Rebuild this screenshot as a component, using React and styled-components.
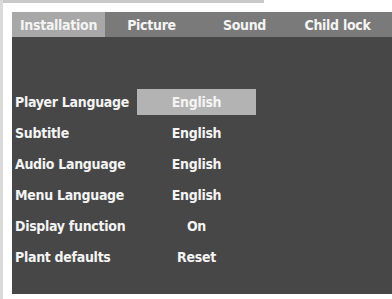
import React from 'react'
import styled, { createGlobalStyle } from 'styled-components'

const GlobalStyle = createGlobalStyle`
  html, body {
    margin: 0;
    padding: 0;
    background: #ffffff;
  }
`

const tabs = ['Installation', 'Picture', 'Sound', 'Child lock']

const settings = [
  { label: 'Player Language', value: 'English', selected: true },
  { label: 'Subtitle', value: 'English' },
  { label: 'Audio Language', value: 'English' },
  { label: 'Menu Language', value: 'English' },
  { label: 'Display function', value: 'On' },
  { label: 'Plant defaults', value: 'Reset' },
]

function App() {
  return (
    <>
      <GlobalStyle />
      <Screen>
        <TopRule />
        <Panel>
          <TabBar>
            {tabs.map((t, i) => (
              <Tab key={t} active={i === 0}>{t}</Tab>
            ))}
          </TabBar>
          <Body>
            {settings.map((s) => (
              <Row key={s.label}>
                <Label>{s.label}</Label>
                <Value selected={s.selected}>{s.value}</Value>
              </Row>
            ))}
          </Body>
        </Panel>
      </Screen>
    </>
  )
}

const Screen = styled.div`
    width: 389px;
    height: 299px;
    background: #ffffff;
    border-left: 3px solid #dadada;
    display: flex;
    flex-direction: column;
    overflow: hidden;
    font-family: 'Liberation Sans Narrow', 'DejaVu Sans Condensed', 'Liberation Sans', sans-serif;
    font-stretch: condensed;
    font-weight: bold;
    font-size: 14px;
    letter-spacing: -0.3px;
    white-space: nowrap;
    color: #f4f4f4;
`

const TopRule = styled.div`
    width: 261px;
    height: 3px;
    background: #c9c9c9;
    flex-shrink: 0;
`

const Panel = styled.div`
    margin: 9px 0 0 9px;
    width: 380px;
    height: 282px;
    flex-shrink: 0;
    display: flex;
    flex-direction: column;
`

const TabBar = styled.div`
    height: 25px;
    background: #7a7a7a;
    display: flex;
`

const Tab = styled.div`
    width: 93px;
    display: flex;
    align-items: center;
    justify-content: center;
    background: ${(p) => (p.active ? '#a8a8a8' : 'transparent')};
`

const Body = styled.div`
    flex: 1;
    background: #474747;
    padding: 49px 0 0 3px;
    display: flex;
    flex-direction: column;
`

const Row = styled.div`
    height: 31px;
    display: flex;
    align-items: center;
`

const Label = styled.div`
    width: 122px;
`

const Value = styled.div`
    width: 119px;
    height: 26px;
    display: flex;
    align-items: center;
    justify-content: center;
    background: ${(p) => (p.selected ? '#b3b3b3' : 'transparent')};
`

export default App
